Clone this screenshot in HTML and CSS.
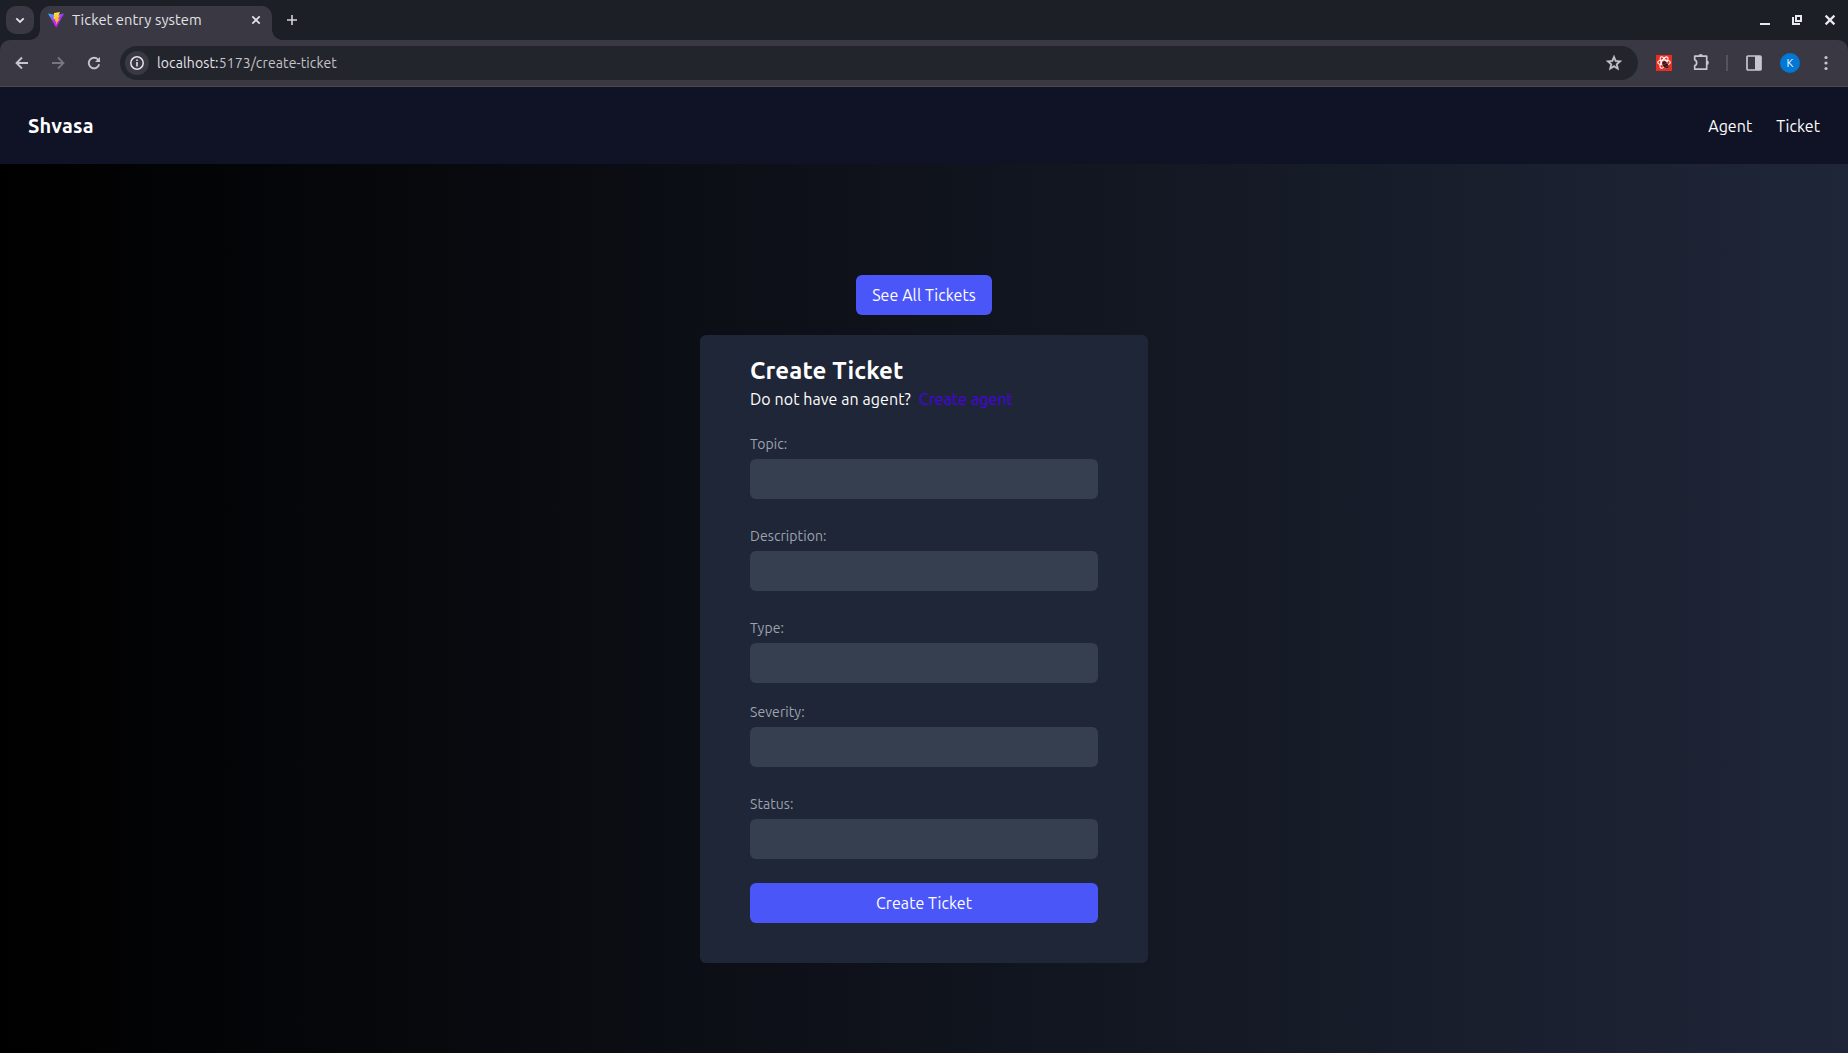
FILE: index.html
```html
<!DOCTYPE html>
<html lang="en">
<head>
<meta charset="utf-8">
<title>Ticket entry system</title>
<link rel="stylesheet" href="styles.css">
</head>
<body>
<div class="browser">
  <div class="tabstrip">
    <div class="tab-search"><svg width="28" height="28" viewBox="0 0 28 28"><path d="M10.3 12.3l3.7 3.7 3.7-3.7" fill="none" stroke="#e3e3e6" stroke-width="1.8"/></svg></div>
    <div class="tab">
      <svg class="favicon" width="16" height="16" viewBox="0 0 16 16">
        <defs>
          <linearGradient id="vite-body" x1="0" y1="0" x2="0.6" y2="1"><stop offset="0" stop-color="#21c8ff"/><stop offset="0.5" stop-color="#b030ff"/><stop offset="1" stop-color="#d00fff"/></linearGradient>
          <linearGradient id="vite-bolt" x1="0" y1="0" x2="0" y2="1"><stop offset="0" stop-color="#ffe83c"/><stop offset="1" stop-color="#ffa800"/></linearGradient>
        </defs>
        <path d="M0 1.5L8 3l8-1.5L8.2 15.7z" fill="url(#vite-body)"/>
        <path d="M12 0L6 1.1l-.5 6.300 2-.4-.6 2.400 1.500-.3-.8 4 4.200-6.600-2.100.400L12 3.500l-1.700.3z" fill="url(#vite-bolt)"/>
      </svg>
      <span class="tab-title">Ticket entry system</span>
      <svg class="tab-close" width="10" height="10" viewBox="0 0 10 10"><path d="M1.3 1.3l7.4 7.4M8.7 1.3L1.3 8.7" stroke="#e3e3e6" stroke-width="1.7"/></svg>
    </div>
    <svg class="new-tab" width="12" height="12" viewBox="0 0 12 12"><path d="M6 1v10M1 6h10" stroke="#d5d3da" stroke-width="1.6"/></svg>
    <div class="window-controls">
      <svg width="12" height="12" viewBox="0 0 12 12"><path d="M2 10h10" stroke="#e8e8f0" stroke-width="2"/></svg>
      <svg width="12" height="12" viewBox="0 0 12 12"><path d="M5 2h5v5H5zM2 3v7h7" fill="none" stroke="#e8e8f0" stroke-width="2"/></svg>
      <svg width="12" height="12" viewBox="0 0 12 12"><path d="M1.6 1.6l8.8 8.8M10.4 1.6l-8.8 8.8" stroke="#e8e8f0" stroke-width="2.2"/></svg>
    </div>
  </div>
  <div class="toolbar">
    <div class="nav-icons">
      <svg width="16" height="16" viewBox="0 0 16 16"><path d="M14 8H3M8 2.5L2.5 8 8 13.5" fill="none" stroke="#c7c5d0" stroke-width="1.8"/></svg>
      <svg width="16" height="16" viewBox="0 0 16 16"><path d="M2 8h11M8 2.5L13.500 8 8 13.500" fill="none" stroke="#77767e" stroke-width="1.8"/></svg>
      <svg width="16" height="16" viewBox="0 0 16 16"><path d="M13.200 9.300A5.300 5.300 0 1 1 12 4.500L13.400 6" fill="none" stroke="#c7c5d0" stroke-width="1.8"/><path d="M14 2v5H9z" fill="#c7c5d0"/></svg>
    </div>
    <div class="omnibox">
      <div class="site-info"><svg width="16" height="16" viewBox="0 0 16 16"><circle cx="8" cy="8" r="6.200" fill="none" stroke="#e3e3e6" stroke-width="1.500"/><path d="M8 7v4.500M8 4.500V6" stroke="#e3e3e6" stroke-width="1.600"/></svg></div>
      <span class="url"><span class="host">localhost:</span>5173/create-ticket</span>
      <svg class="star" width="16" height="16" viewBox="2 2 20 20"><path d="M8.850 16.825L12 14.925l3.150 1.925-.825-3.600 2.775-2.400-3.650-.325-1.450-3.400-1.450 3.375-3.650.325 2.775 2.425-.825 3.575zM5.825 21l1.625-7.025L2 9.250l7.200-.625L12 2l2.800 6.625 7.200.625-5.450 4.725L18.175 21 12 17.275 5.825 21z" fill="#c7c5c8" stroke="#c7c5c8" stroke-width=".3" fill-rule="evenodd"/></svg>
    </div>
    <div class="actions">
      <svg class="ext" width="16" height="16" viewBox="0 0 16 16"><path d="M0 0h16v16H0z" fill="#ef2b20"/><g fill="none" stroke="#fff" stroke-width="1.100"><ellipse cx="8" cy="7.500" rx="6.300" ry="2.500"/><ellipse cx="8" cy="7.500" rx="6.300" ry="2.500" transform="rotate(60 8 7.500)"/><ellipse cx="8" cy="7.500" rx="6.300" ry="2.500" transform="rotate(120 8 7.500)"/></g><ellipse cx="9.500" cy="10" rx="2.600" ry="4" transform="rotate(-35 9.500 10)" fill="#252020"/><path d="M6 10.500l6-3M7.500 13l6-3" stroke="#ef2b20" stroke-width=".6"/></svg>
      <svg class="puzzle" width="18" height="18" viewBox="0 0 18 18"><path d="M2.700 2.200h12v13h-12v-3.600c2.600-.6 2.600-5.200 0-5.800z" fill="none" stroke="#c7c5d0" stroke-width="1.700" stroke-linejoin="round"/><path d="M6.500 2.200a2.200 2.200 0 0 1 4.400 0zM14.700 6.500a2.200 2.200 0 0 1 0 4.400z" fill="#c7c5d0"/></svg>
      <i class="divider"></i>
      <svg class="panel" width="16" height="16" viewBox="0 0 16 16"><rect x="1" y="1" width="14" height="14" rx="1" fill="none" stroke="#c7c5d0" stroke-width="1.700"/><path d="M9 1h6v14H9z" fill="#c7c5d0"/></svg>
      <span class="avatar">K</span>
      <svg class="dots" width="4" height="16" viewBox="0 0 4 16"><g fill="#c7c5d0"><circle cx="2" cy="2.500" r="1.600"/><circle cx="2" cy="8" r="1.600"/><circle cx="2" cy="13.500" r="1.600"/></g></svg>
    </div>
  </div>
</div>
<header class="site-header">
  <a class="brand">Shvasa</a>
  <nav class="links"><a class="link-agent">Agent</a><a class="link-ticket">Ticket</a></nav>
</header>
<main class="page">
  <button class="btn see-all"><span>See All Tickets</span></button>
  <form class="card">
    <h1 class="title"><span>Create Ticket</span></h1>
    <p class="hint"><span class="question">Do not have an agent?</span><a class="create-agent">Create agent</a></p>
    <div class="field"><label class="l-topic">Topic:</label><input type="text"></div>
    <div class="field"><label class="l-description">Description:</label><input type="text"></div>
    <div class="field tight"><label class="l-type">Type:</label><input type="text"></div>
    <div class="field"><label class="l-severity">Severity:</label><input type="text"></div>
    <div class="field last"><label class="l-status">Status:</label><input type="text"></div>
    <button class="btn submit" type="button"><span>Create Ticket</span></button>
  </form>
</main>
</body>
</html>
```
FILE: styles.css
```css
* { box-sizing: border-box; }
body {
  margin: 0;
  height: 1053px;
  display: flex;
  flex-direction: column;
  overflow: hidden;
  background: #000;
  color: #fff;
  font: 16px/24px Ubuntu, "Noto Sans", sans-serif;
  letter-spacing: 0.07px;
}
svg { display: block; flex: none; }
span, a, label { white-space: nowrap; }

.browser { height: 87px; flex: none; background: #1d1f27; }
.tabstrip { height: 40px; display: flex; align-items: flex-start; padding: 0 6px; }
.tab-search { width: 28px; height: 28px; margin-top: 6px; border-radius: 10px; background: #3a3943; }
.tab {
  position: relative;
  width: 232px;
  height: 34px;
  margin: 6px 0 0 6px;
  padding: 0 11px 6px 8px;
  display: flex;
  align-items: center;
  border-radius: 10px 10px 0 0;
  background: #3a3943;
}
.tab::before, .tab::after {
  content: "";
  position: absolute;
  bottom: 0;
  width: 10px;
  height: 10px;
}
.tab::before { left: -10px; background: radial-gradient(circle at 0 0, transparent 9.5px, #3a3943 10px); }
.tab::after { right: -10px; background: radial-gradient(circle at 100% 0, transparent 9.5px, #3a3943 10px); }
.tab-title { margin-left: 8px; font-size: 14.7px; letter-spacing: 0.08px; color: #e3e1e6; }
.tab-close { margin-left: auto; }
.new-tab { margin: 14px 0 0 14px; }
.window-controls { margin: 14px 6px 0 auto; display: flex; gap: 21px; }

.toolbar {
  height: 47px;
  display: flex;
  align-items: flex-start;
  padding: 6px 20px 0 14px;
  border-radius: 10px 10px 0 0;
  border-bottom: 1px solid #4a494d;
  background: #3a3943;
}
.nav-icons { display: flex; gap: 20px; padding: 9px 18px 0 0; }
.omnibox {
  height: 34px;
  width: 1518px;
  flex: none;
  display: flex;
  align-items: center;
  padding: 0 16px 0 5px;
  border-radius: 17px;
  background: #23252d;
}
.site-info { width: 24px; height: 24px; display: grid; place-items: center; border-radius: 50%; background: #3a3943; }
.url { margin-left: 8px; font-size: 14px; letter-spacing: 0.12px; color: #c5c4c9; }
.host { color: #e5e4e8; }
.star { margin-left: auto; }
.actions { height: 34px; display: flex; align-items: center; }
.ext { margin-left: 18px; }
.puzzle { margin-left: 20px; }
.divider { width: 2px; height: 16px; margin-left: 16px; background: #55545e; }
.panel { margin-left: 18px; }
.avatar { width: 20px; height: 20px; margin-left: 18px; border-radius: 50%; background: #0078d4; font-size: 11px; line-height: 20px; text-align: center; }
.dots { margin-left: 24px; }

.site-header {
  height: 77px;
  flex: none;
  display: flex;
  align-items: center;
  justify-content: space-between;
  padding: 0 28px;
  background: #101326;
}
.brand { font-size: 20px; font-weight: 700; letter-spacing: 0.2px; }
.links { display: flex; gap: 24px; letter-spacing: 0.04px; }

.page {
  flex: 1;
  display: flex;
  flex-direction: column;
  align-items: center;
  padding-top: 111px;
  background: linear-gradient(90deg, #000, #1f2638);
}
.btn {
  display: block;
  height: 40px;
  padding: 0;
  border: 0;
  border-radius: 6px;
  background: #4a56f8;
  color: #fff;
  font: inherit;
  letter-spacing: inherit;
  text-align: center;
}
.see-all { width: 136px; }
.card {
  width: 448px;
  height: 628px;
  margin-top: 20px;
  padding: 20px 50px 0;
  border-radius: 6px;
  background: #1f2637;
}
.title { margin: 0; font-size: 24px; line-height: 32px; font-weight: 700; letter-spacing: 0.13px; }
.hint { margin: 0 0 23px; display: flex; gap: 8px; }
.create-agent { color: #4800ec; }
.field { margin-bottom: 27px; }
.field.tight { margin-bottom: 19px; }
.field.last { margin-bottom: 24px; }
.field label { display: block; width: max-content; height: 20px; margin-bottom: 5px; font-size: 14px; line-height: 20px; color: #9ca3af; }
.field input { display: block; width: 100%; height: 40px; border: 0; border-radius: 6px; background: #363f50; }
.submit { width: 100%; }
```
